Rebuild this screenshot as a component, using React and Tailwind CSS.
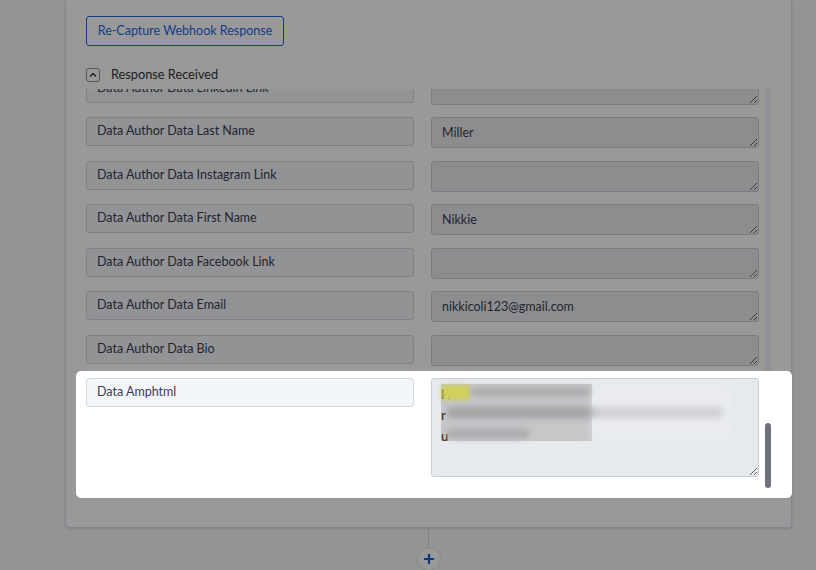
import React from "react";

const rows = [
  { label: "Data Author Data Linkedin Link", value: "" },
  { label: "Data Author Data Last Name", value: "Miller" },
  { label: "Data Author Data Instagram Link", value: "" },
  { label: "Data Author Data First Name", value: "Nikkie" },
  { label: "Data Author Data Facebook Link", value: "" },
  { label: "Data Author Data Email", value: "nikkicoli123@gmail.com" },
  { label: "Data Author Data Bio", value: "" },
];

function LabelBox({ children }) {
  return (
    <div className="h-[29px] rounded-[3px] border border-[#d3d7de] bg-[#f2f5f9] px-[10px] flex items-center text-[12.5px] text-[#3c3c50]">
      {children}
    </div>
  );
}

function ValueBox({ value }) {
  return (
    <textarea
      readOnly
      defaultValue={value}
      className="block w-full h-[31px] rounded-[3px] border border-[#c9ced6] bg-[#e9ecef] pl-[10px] pt-[6px] text-[12.5px] leading-[17px] text-[#3c3c50] outline-none overflow-hidden"
    />
  );
}

// Redacted multi-line value of the AMP html field
function AmpValue() {
  return (
    <div className="relative">
      <textarea
        readOnly
        className="block w-full h-[99px] rounded-[3px] border border-[#c9ced6] bg-[#e6e9ed] outline-none overflow-hidden"
      />
      <div className="absolute left-[10px] top-[6px] w-[290px] h-[60px] pointer-events-none">
        <div className="absolute left-0 top-0 w-[151px] h-[57px] bg-[#c6c7c9]" />
        <div className="absolute left-0 top-0 flex flex-col text-[13px] leading-[21px] text-[#4a3520] font-semibold">
          <span>H</span>
          <span>r</span>
          <span>u</span>
        </div>
        <div className="absolute left-[1px] top-[1px] w-[28px] h-[15px] bg-[#d0d05a] blur-[2px]" />
        <div className="absolute left-[30px] top-[4px] w-[120px] h-[8px] rounded bg-[#a8a9ab] blur-[3px]" />
        <div className="absolute left-[6px] top-[23px] w-[276px] h-[11px] rounded bg-[#a2a3a5] blur-[3px]" />
        <div className="absolute left-[6px] top-[45px] w-[82px] h-[9px] rounded bg-[#a9aaac] blur-[3px]" />
        <div className="absolute left-[151px] top-[2px] w-[140px] h-[54px] bg-[#eceef1]/60 blur-[4px]" />
      </div>
    </div>
  );
}

export default function App() {
  return (
    <div
      className="relative min-h-[570px] h-[570px] overflow-hidden bg-[#f6f7f9]"
      style={{ fontFamily: "Lato, 'Open Sans', sans-serif" }}
    >
      <div className="ml-[65px] w-[727px] border-x border-b border-[#d9dff0] rounded-b-[4px] bg-white shadow-sm pt-4 pl-5 pr-[19px] pb-[27px]">
        <button className="h-[30px] w-[198px] rounded-[3px] border border-[#1f66e0] text-[#1f66e0] text-[12.5px] bg-white">
          Re-Capture Webhook Response
        </button>

        <div className="mt-[22px] flex items-center h-[14px] gap-[11px]">
          <span className="w-[14px] h-[14px] rounded-[3px] border border-[#8a8f97] flex items-center justify-center">
            <svg width="8" height="6" viewBox="0 0 8 6" fill="none">
              <path d="M1 4.5L4 1.5L7 4.5" stroke="#2f2f3a" strokeWidth="1.4" />
            </svg>
          </span>
          <span className="text-[12.75px] text-[#333333]">Response Received</span>
        </div>

        <div className="mt-[7px] h-[411px] flex overflow-y-clip">
          <div className="w-[673px] -mt-[15.5px] flex flex-col gap-[12.5px]">
            {rows.map((r) => (
              <div key={r.label} className="grid grid-cols-2 gap-x-[17px] items-start">
                <LabelBox>{r.label}</LabelBox>
                <ValueBox value={r.value} />
              </div>
            ))}
            <div className="relative z-20 grid grid-cols-2 gap-x-[17px] items-start">
              <div className="absolute -left-[10px] -top-[7px] -right-[33px] -bottom-[21px] -z-10 rounded-[5px] bg-white" />
              <LabelBox>Data Amphtml</LabelBox>
              <AmpValue />
            </div>
          </div>
          <div className="ml-[6px] w-[6px] h-[401px] bg-[#eef3fa] flex flex-col justify-end">
            <div className="relative z-30 mb-[2px] h-[65px] w-[6px] rounded-full bg-[#6c717a]" />
          </div>
        </div>
      </div>

      <div className="flex flex-col items-center w-[727px] ml-[65px]">
        <div className="w-px h-[19px] bg-[#d2d6dd]" />
        <div className="w-[24px] h-[24px] rounded-full bg-white border border-[#e2e5ea] flex items-center justify-center">
          <svg width="12" height="12" viewBox="0 0 12 12">
            <path d="M6 1V11M1 6H11" stroke="#1260d4" strokeWidth="2.2" />
          </svg>
        </div>
      </div>

      {/* dimming layer behind the focused row */}
      <div className="fixed inset-0 z-10 bg-black/40" />
    </div>
  );
}
